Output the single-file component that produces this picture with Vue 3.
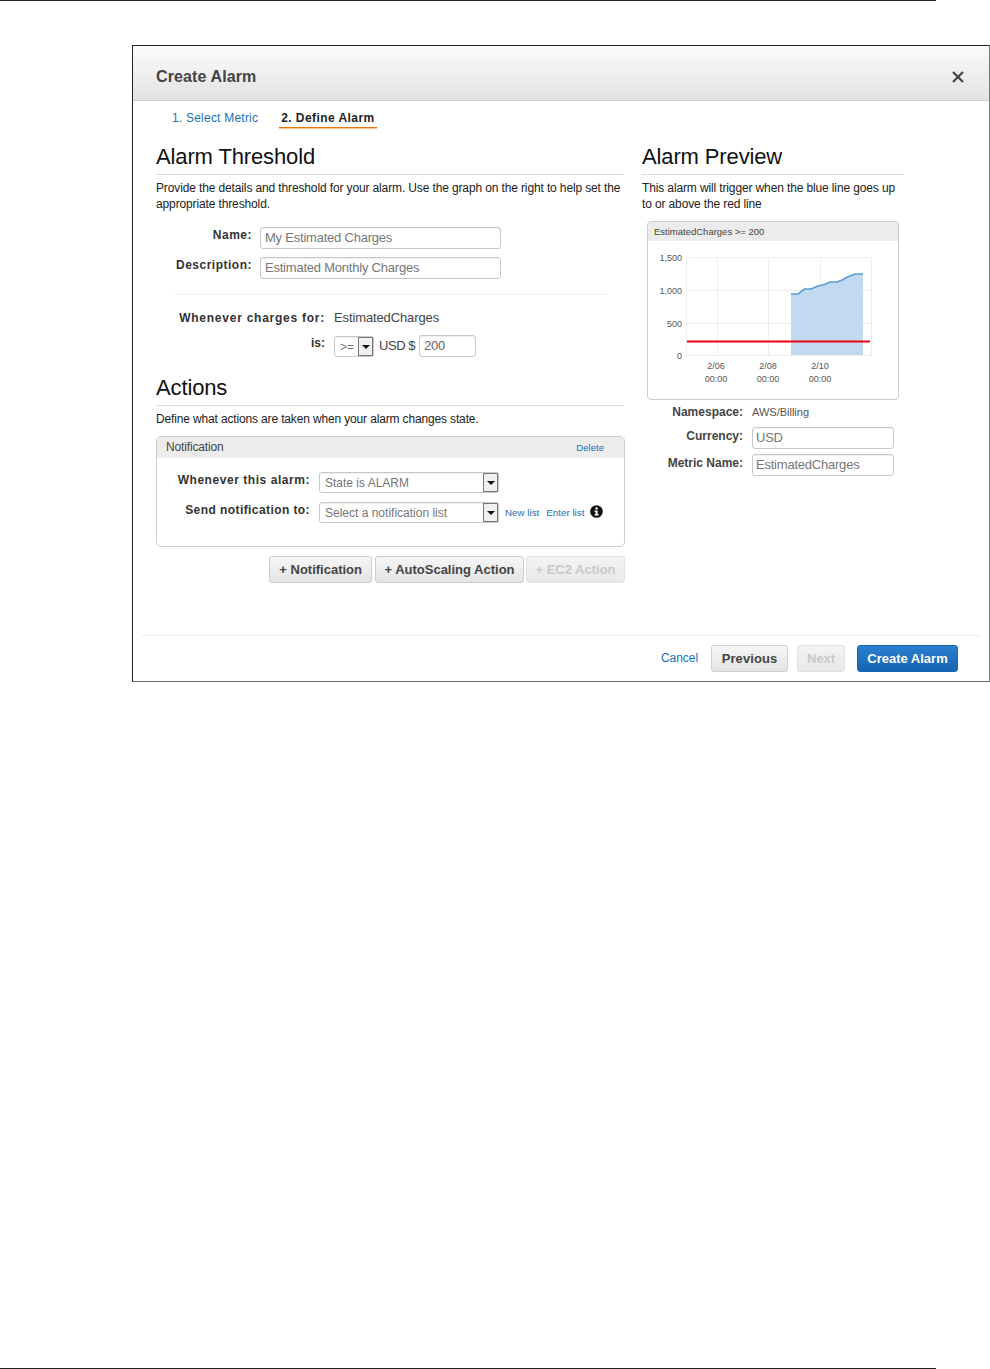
<script setup>
const yTicks = [
  { label: '1,500', y: 261 },
  { label: '1,000', y: 294 },
  { label: '500', y: 327 },
  { label: '0', y: 359 },
]
const xTicks = [
  { a: '2/06', b: '00:00', x: 716 },
  { a: '2/08', b: '00:00', x: 768 },
  { a: '2/10', b: '00:00', x: 820 },
]
const line = '791,294 798,294 804.5,289 811,289 818,286 824.5,284.5 830,282 837,282 842,280 847,277.3 855,274 863,274'
</script>

<template>
  <div class="page">
    <div class="rule"></div>
    <section class="dialog">
      <header class="head">
        <h1>Create Alarm</h1>
        <svg class="close" width="12" height="12" viewBox="0 0 12 12"><path d="M1 1 L11 11 M11 1 L1 11" stroke="#444" stroke-width="2.2" fill="none" /></svg>
      </header>
      <nav class="tabs">
        <a class="tab link">1. Select Metric</a>
        <a class="tab current">2. Define Alarm</a>
      </nav>
      <div class="cols">
        <div class="left">
          <h2>Alarm Threshold</h2>
          <p class="desc">Provide the details and threshold for your alarm. Use the graph on the right to help set the appropriate threshold.</p>
          <div class="form">
            <label>Name:</label>
            <div class="input wide">My Estimated Charges</div>
            <label>Description:</label>
            <div class="input wide">Estimated Monthly Charges</div>
          </div>
          <div class="sep"></div>
          <div class="cond">
            <label>Whenever charges for:</label>
            <span class="val">EstimatedCharges</span>
            <label class="is">is:</label>
            <div class="inline">
              <div class="select small"><span>&gt;=</span><i class="arrow"></i></div>
              <span class="val usd">USD $</span>
              <div class="input tiny">200</div>
            </div>
          </div>
          <h2 class="actions">Actions</h2>
          <p class="desc short">Define what actions are taken when your alarm changes state.</p>
          <div class="box">
            <div class="box-head"><span>Notification</span><a class="link">Delete</a></div>
            <div class="notify">
              <label>Whenever this alarm:</label>
              <div class="select big"><span>State is ALARM</span><i class="arrow"></i></div>
              <label class="send">Send notification to:</label>
              <div class="inline">
                <div class="select big"><span>Select a notification list</span><i class="arrow"></i></div>
                <a class="link mini first">New list</a>
                <a class="link mini">Enter list</a>
                <svg class="info" width="13" height="13" viewBox="0 0 14 14">
                  <circle cx="7" cy="7" r="6.8" fill="#111" />
                  <rect x="5.9" y="2.6" width="2.4" height="2.2" fill="#fff" />
                  <path d="M4.8 6 H8.2 V10 H9.4 V11.4 H4.8 V10 H6 V7.4 H4.8 Z" fill="#fff" />
                </svg>
              </div>
            </div>
          </div>
          <div class="add">
            <button class="btn">+ Notification</button>
            <button class="btn auto">+ AutoScaling Action</button>
            <button class="btn off ec2">+ EC2 Action</button>
          </div>
        </div>
        <div class="right">
          <h2>Alarm Preview</h2>
          <p class="desc">This alarm will trigger when the blue line goes up to or above the red line</p>
          <div class="chart">
            <div class="chart-head">EstimatedCharges &gt;= 200</div>
            <svg class="plot" width="250" height="158" viewBox="648 241 250 158">
              <g stroke="#eeeeee" stroke-width="1" fill="none">
                <path d="M687 257.5 H871 M687 290.5 H871 M687 323.5 H871 M687 355.5 H871" />
                <path d="M686.5 257 V356 M717.5 257 V356 M768.5 257 V356 M820.5 257 V356 M871.5 257 V356" />
              </g>
              <polygon :points="line + ' 863,355 791,355'" fill="#c2d9f2" />
              <polyline :points="line" fill="none" stroke="#5b9bd5" stroke-width="1.6" />
              <path d="M687 341.5 H870" stroke="#f0000a" stroke-width="2" />
              <text v-for="t in yTicks" :key="t.label" :x="682" :y="t.y" text-anchor="end" class="tick">{{ t.label }}</text>
              <g v-for="t in xTicks" :key="t.a">
                <text :x="t.x" y="369" text-anchor="middle" class="tick">{{ t.a }}</text>
                <text :x="t.x" y="382" text-anchor="middle" class="tick">{{ t.b }}</text>
              </g>
            </svg>
          </div>
          <div class="meta">
            <label>Namespace:</label>
            <span class="ns">AWS/Billing</span>
            <label>Currency:</label>
            <div class="input mid">USD</div>
            <label>Metric Name:</label>
            <div class="input mid">EstimatedCharges</div>
          </div>
        </div>
      </div>
      <footer class="foot">
        <a class="link cancel">Cancel</a>
        <button class="btn prev">Previous</button>
        <button class="btn off next">Next</button>
        <button class="btn primary">Create Alarm</button>
      </footer>
    </section>
    <div class="rule bottom"></div>
  </div>
</template>

<style>
html, body { margin: 0; background: #fff; }
</style>

<style scoped>
.page {
  height: 1369px;
  display: flex;
  flex-direction: column;
  font-family: "Liberation Sans", Arial, sans-serif;
  font-size: 12px;
  color: #222;
  overflow: hidden;
}
.rule { width: 936px; height: 1px; background: #222; flex: none; }
.rule.bottom { margin-top: auto; }
.dialog {
  box-sizing: border-box;
  margin: 44px 0 0 132px;
  width: 858px;
  height: 637px;
  border: 1px solid #222;
  border-right-color: #777;
  border-bottom-color: #666;
  display: flex;
  flex-direction: column;
  flex: none;
}
.head {
  height: 47px;
  flex: none;
  box-sizing: content-box;
  border-bottom: 1px solid #cfcfcf;
  background: linear-gradient(#fbfbfb, #e3e3e3);
  display: flex;
  align-items: center;
  justify-content: space-between;
  padding: 7px 25px 0 23px;
}
.head h1 { margin: 0; font-size: 16px; font-weight: 700; color: #444; letter-spacing: 0.12px; }
.tabs {
  margin: 9px 0 0 39px;
  height: 18px;
  display: flex;
  gap: 21px;
  flex: none;
}
.tab { line-height: 17px; font-size: 12px; letter-spacing: 0.22px; }
.tab.current {
  font-weight: 700;
  color: #222;
  border-bottom: 1px solid #e8750a;
  box-shadow: 0 1px 0 #f6c48f;
  height: 17px;
  padding: 0 2px;
  letter-spacing: 0.43px;
}
.link { color: #1a6fb5; text-decoration: none; }
.cols {
  flex: 1;
  display: flex;
  gap: 18px;
  margin: 16px 0 0 23px;
}
.left { width: 468px; }
.right { width: 262px; }
h2 {
  margin: 0;
  font-size: 22px;
  font-weight: 400;
  line-height: 26px;
  color: #111;
  padding-bottom: 4px;
  border-bottom: 1px solid #dcdcdc;
  letter-spacing: -0.13px;
}
h2.actions { margin-top: 18px; }
.desc { margin: 5px 0 0; line-height: 16px; color: #222; letter-spacing: -0.13px; }
.desc.short { letter-spacing: -0.15px; }
label { font-weight: 700; color: #333; line-height: 16px; text-align: right; white-space: nowrap; }
.form {
  margin-top: 15px;
  display: grid;
  grid-template-columns: 96px 241px;
  column-gap: 8px;
  row-gap: 8px;
}
.form label { letter-spacing: 0.5px; }
.input {
  box-sizing: border-box;
  height: 22px;
  line-height: 20px;
  border: 1px solid #c8c8c8;
  border-radius: 3px;
  padding: 0 4px;
  font-size: 13px;
  letter-spacing: -0.22px;
  color: #777;
  background: #fff;
  white-space: nowrap;
  box-shadow: inset 0 1px 1px #eee;
}
.wide { width: 241px; }
.tiny { width: 57px; margin-left: 4px; color: #666; }
.mid { width: 142px; padding-left: 3px; }
.sep { height: 1px; background: #eeeeee; margin: 15px 17px 0 19px; }
.cond {
  margin-top: 15px;
  display: grid;
  grid-template-columns: 169px auto;
  column-gap: 9px;
  row-gap: 9px;
  align-items: start;
}
.cond label { letter-spacing: 0.75px; }
.cond label.is { letter-spacing: 0; }
.val { font-size: 13px; color: #444; line-height: 16px; letter-spacing: -0.12px; }
.inline { display: flex; align-items: center; }
.usd { margin-left: 5px; letter-spacing: -0.45px; }
.select {
  box-sizing: border-box;
  height: 21px;
  border: 1px solid #c8c8c8;
  border-radius: 3px;
  display: flex;
  align-items: stretch;
  justify-content: space-between;
  color: #777;
  font-size: 12px;
  background: #fff;
  box-shadow: inset 0 1px 1px #eee;
  flex: none;
}
.select span { line-height: 20px; padding-left: 5px; white-space: nowrap; }
.small { width: 40px; }
.big { width: 180px; }
.arrow {
  width: 15px;
  flex: none;
  box-sizing: border-box;
  border: 1px solid #777;
  background: #f0f0f0;
  position: relative;
}
.arrow::after {
  content: "";
  position: absolute;
  left: 3px;
  top: 7px;
  border-left: 4px solid transparent;
  border-right: 4px solid transparent;
  border-top: 4px solid #111;
}
.box {
  margin-top: 9px;
  width: 469px;
  box-sizing: border-box;
  height: 111px;
  border: 1px solid #ccc;
  border-radius: 5px;
  overflow: hidden;
}
.box-head {
  box-sizing: border-box;
  height: 21px;
  background: #ececec;
  display: flex;
  justify-content: space-between;
  align-items: center;
  padding: 0 20px 1px 9px;
  color: #444;
  letter-spacing: -0.15px;
}
.box-head a { font-size: 9.6px; letter-spacing: 0; }
.notify {
  margin-top: 14px;
  display: grid;
  grid-template-columns: 153px auto;
  column-gap: 9px;
  row-gap: 9px;
  align-items: start;
}
.notify label { letter-spacing: 0.55px; }
.notify label.send { letter-spacing: 0.42px; }
.mini { font-size: 9.8px; margin-left: 7px; white-space: nowrap; }
.mini.first { margin-left: 6px; }
.info { margin-left: 6px; margin-top: -3px; flex: none; }
.add {
  margin-top: 9px;
  width: 469px;
  display: flex;
  justify-content: flex-end;
  gap: 3px;
}
.btn {
  box-sizing: border-box;
  height: 27px;
  padding: 0 9px;
  border: 1px solid #cfcfcf;
  border-radius: 3px;
  background: linear-gradient(#f6f6f6, #e4e4e4);
  font-family: inherit;
  font-size: 13px;
  font-weight: 700;
  color: #444;
  white-space: nowrap;
}
.btn.auto { width: 149px; padding: 0; }
.btn.ec2 { width: 99px; padding: 0; margin-left: -1px; }
.btn.off { color: #c8c8c8; background: linear-gradient(#f3f3f3, #e9e9e9); border-color: #e2e2e2; }
.chart {
  margin: 9px 0 0 5px;
  width: 252px;
  height: 179px;
  box-sizing: border-box;
  border: 1px solid #ccc;
  border-radius: 4px;
  overflow: hidden;
}
.chart-head {
  height: 19px;
  line-height: 19px;
  background: #ececec;
  font-size: 9.5px;
  color: #444;
  padding-left: 6px;
}
.plot { display: block; }
.tick { font-size: 9px; fill: #555; font-family: "Liberation Sans", Arial, sans-serif; }
.meta {
  margin-top: 4px;
  display: grid;
  grid-template-columns: 101px 142px;
  grid-template-rows: 18px 22px 22px;
  column-gap: 9px;
  row-gap: 5px;
  align-items: start;
}
.ns { font-size: 11px; color: #555; line-height: 16px; }
.meta label { color: #444; padding-top: 1px; }
.meta label:first-child { padding-top: 0; }
.foot {
  flex: none;
  box-sizing: border-box;
  margin: 0 9px 0 8px;
  border-top: 1px solid #f0f0f0;
  height: 46px;
  padding: 9px 22px 0 0;
  display: flex;
  justify-content: flex-end;
  align-items: flex-start;
}
.cancel { line-height: 27px; margin-right: 13px; letter-spacing: -0.05px; }
.prev { width: 77px; margin-right: 9px; letter-spacing: 0.1px; }
.next { width: 48px; margin-right: 12px; }
.primary {
  width: 101px;
  color: #fff;
  background: linear-gradient(#2a7fd0, #1564b4);
  border-color: #1a66b0;
}
</style>
